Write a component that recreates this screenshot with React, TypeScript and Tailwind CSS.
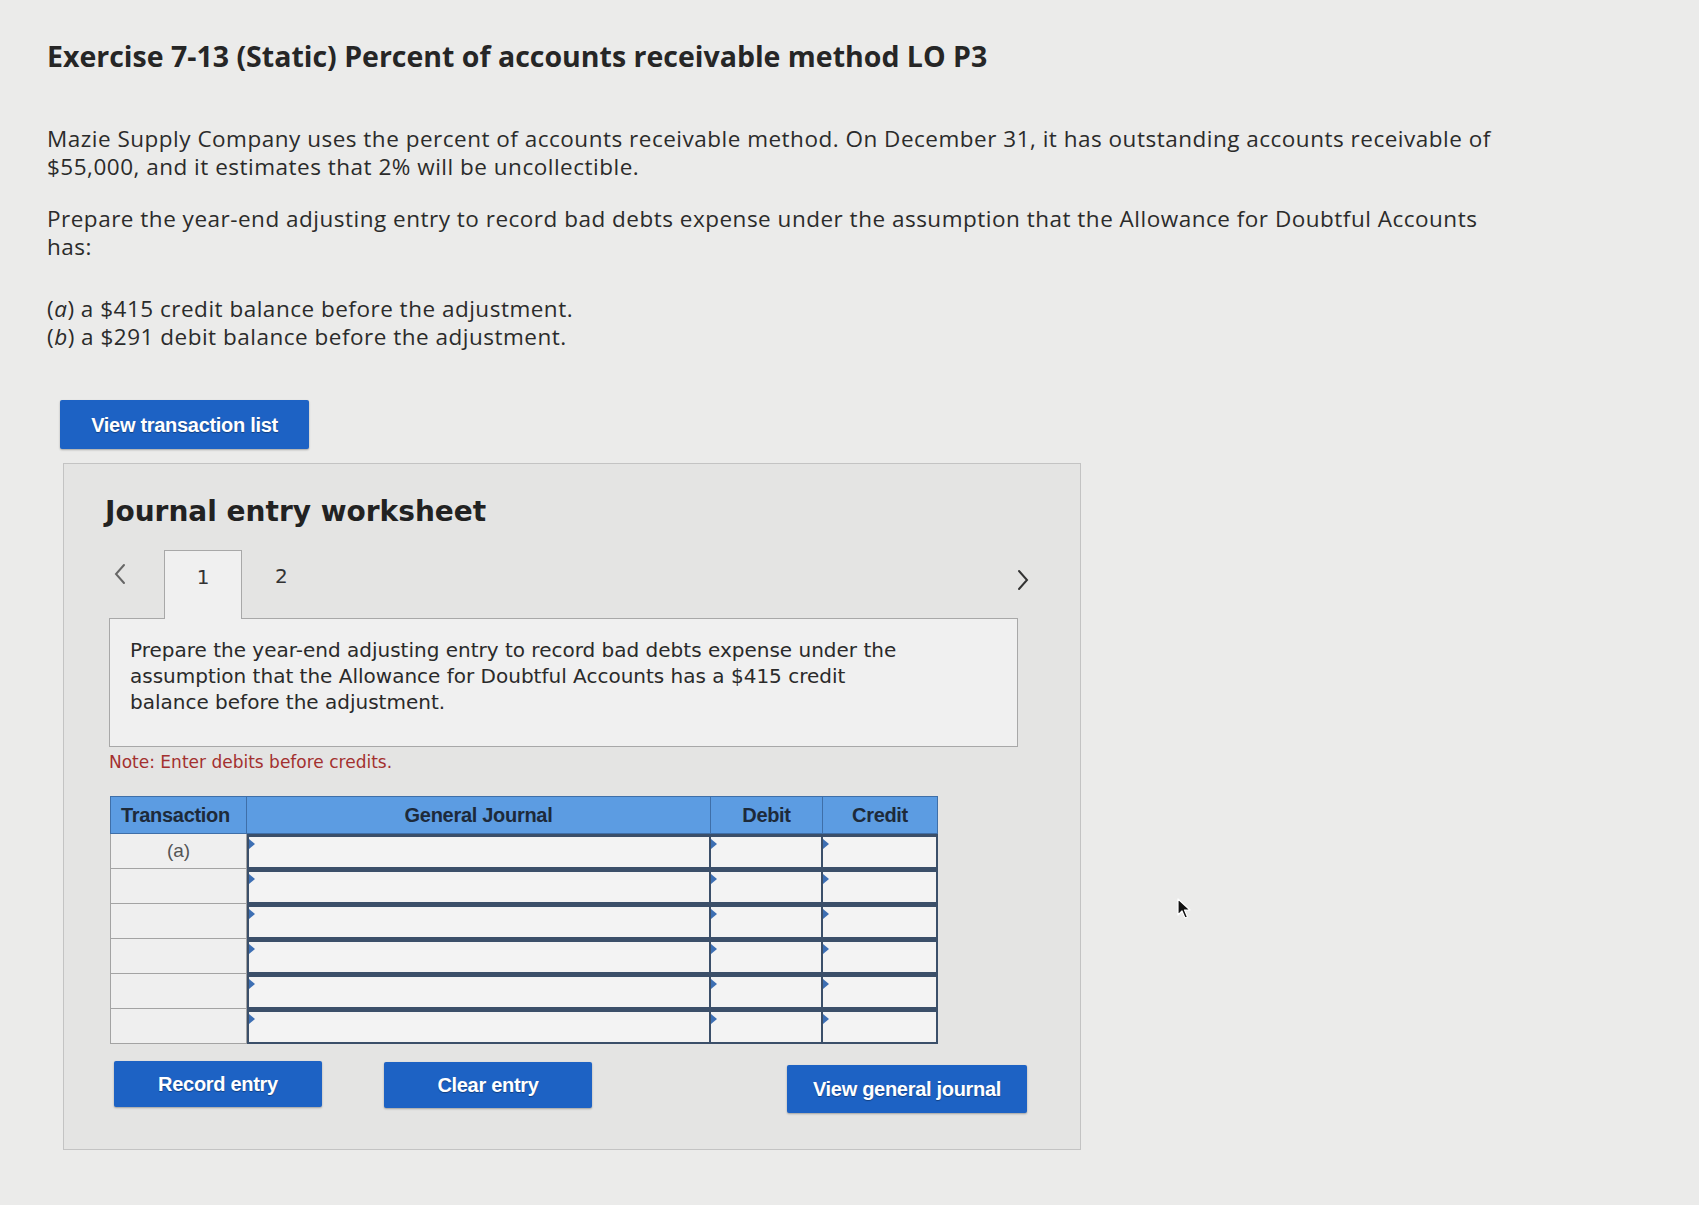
import React from "react";

const Tri = () => (
  <span className="absolute left-0 top-[2px] w-0 h-0 border-t-[5px] border-b-[5px] border-l-[6px] border-t-transparent border-b-transparent border-l-[#3d6fb3]" />
);

function Row({ label }: { label?: string }) {
  return (
    <>
      <div className="h-[35px] bg-[#efefef] border-b border-l border-r border-[#a3a3a3] flex items-center justify-center text-[19px] text-[#555] font-['Liberation_Sans',sans-serif]">
        {label}
      </div>
      <div className="h-[35px] relative bg-[#f3f3f3] border-2 border-t-[3px] border-[#3b4f69]">
        <Tri />
      </div>
      <div className="h-[35px] relative bg-[#f3f3f3] border-2 border-t-[3px] border-[#3b4f69] border-l-0">
        <Tri />
      </div>
      <div className="h-[35px] relative bg-[#f3f3f3] border-2 border-t-[3px] border-[#3b4f69] border-l-0">
        <Tri />
      </div>
    </>
  );
}

const btn =
  "shrink-0 h-[46px] bg-[#1d62c4] rounded-[2px] text-white text-[20px] font-bold tracking-[-0.3px] [text-shadow:0_1px_1px_rgba(0,0,0,0.35)] shadow-[0_1px_2px_rgba(0,0,0,0.3)]";

export default function App() {
  return (
    <div className="relative w-full min-h-[1205px] bg-[#ebebea] text-[#2b2b2b] overflow-hidden">
      <div className="pl-[47px] pt-[39px] font-['Open_Sans',sans-serif]">
        <h1 className="text-[28.5px] leading-[34px] font-bold text-[#262626]">
          Exercise 7-13 (Static) Percent of accounts receivable method LO P3
        </h1>
        <p className="mt-[52px] text-[22.5px] leading-[28px] tracking-[0.5px] w-[1600px]">
          Mazie Supply Company uses the percent of accounts receivable method. On December 31, it has outstanding accounts receivable of
          <br />
          $55,000, and it estimates that 2% will be uncollectible.
        </p>
        <p className="mt-[24px] text-[22.5px] leading-[28px] tracking-[0.5px] w-[1600px]">
          Prepare the year-end adjusting entry to record bad debts expense under the assumption that the Allowance for Doubtful Accounts
          <br />
          has:
        </p>
        <div className="mt-[34px] text-[22.5px] leading-[28px] tracking-[0.5px]">
          <div>
            (<i>a</i>) a $415 credit balance before the adjustment.
          </div>
          <div>
            (<i>b</i>) a $291 debit balance before the adjustment.
          </div>
        </div>

        <button className={`mt-[49px] ml-[13px] w-[249px] !h-[49px] font-['Liberation_Sans',sans-serif] ${btn}`}>
          View transaction list
        </button>

        <div className="mt-[14px] ml-[16px] w-[1018px] h-[687px] bg-[#e4e4e3] border border-[#c3c3c3] pt-[31px] pl-[45px] pr-[62px] font-['DejaVu_Sans',sans-serif]">
          <h2 className="text-[28px] leading-[34px] font-bold text-[#222] ml-[-4px]">
            Journal entry worksheet
          </h2>

          <div className="mt-[21px] relative h-[68px] flex items-start">
            <svg className="mt-[12px] ml-[4px]" width="14" height="24" viewBox="0 0 14 24">
              <path d="M11 3 L3 12 L11 21" fill="none" stroke="#666" strokeWidth="2" strokeLinecap="round" />
            </svg>
            <div className="ml-[37px] w-[78px] h-[69px] bg-[#f0f0f0] border border-b-0 border-[#a8a8a8] relative z-10 flex justify-center pt-[11px] text-[20px] text-[#333]">
              1
            </div>
            <div className="ml-[33px] pt-[11px] text-[20px] text-[#333]">2</div>
            <svg className="absolute right-[-12px] top-[18px]" width="14" height="24" viewBox="0 0 14 24">
              <path d="M3 3 L11 12 L3 21" fill="none" stroke="#333" strokeWidth="2" strokeLinecap="round" />
            </svg>
          </div>

          <div className="h-[129px] bg-[#f0f0f0] border border-[#a8a8a8] pt-[18px] pl-[20px] text-[20px] leading-[26px] text-[#2a2a2a]">
            Prepare the year-end adjusting entry to record bad debts expense under the
            <br />
            assumption that the Allowance for Doubtful Accounts has a $415 credit
            <br />
            balance before the adjustment.
          </div>

          <div className="mt-[5px] text-[17px] leading-[20px] text-[#a3302f]">
            Note: Enter debits before credits.
          </div>

          <div className="mt-[24px] ml-[1px] w-[828px] grid grid-cols-[137px_464px_112px_115px] font-['Liberation_Sans',sans-serif]">
            <div className="h-[38px] bg-[#5c9ce2] border border-[#3f6fa8] flex items-center pl-[10px] text-[20px] font-bold text-[#1d2a3a] tracking-[-0.3px]">
              Transaction
            </div>
            <div className="h-[38px] bg-[#5c9ce2] border-y border-r border-[#3f6fa8] flex items-center justify-center text-[20px] font-bold text-[#1d2a3a] tracking-[-0.3px]">
              General Journal
            </div>
            <div className="h-[38px] bg-[#5c9ce2] border-y border-r border-[#3f6fa8] flex items-center justify-center text-[20px] font-bold text-[#1d2a3a] tracking-[-0.3px]">
              Debit
            </div>
            <div className="h-[38px] bg-[#5c9ce2] border-y border-r border-[#3f6fa8] flex items-center justify-center text-[20px] font-bold text-[#1d2a3a] tracking-[-0.3px]">
              Credit
            </div>
            <Row label="(a)" />
            <Row />
            <Row />
            <Row />
            <Row />
            <Row />
          </div>

          <div className="mt-[17px] flex items-start font-['Liberation_Sans',sans-serif]">
            <button className={`ml-[5px] w-[208px] ${btn}`}>Record entry</button>
            <button className={`ml-[62px] mt-[1px] w-[208px] ${btn}`}>Clear entry</button>
            <button className={`ml-[195px] mt-[4px] w-[240px] !h-[48px] ${btn}`}>View general journal</button>
          </div>
        </div>
      </div>

      <svg className="absolute left-[1176px] top-[898px]" width="16" height="22" viewBox="0 0 16 22">
        <path d="M2 1 L2 17 L6 13 L9 20 L11.5 19 L8.5 12 L14 12 Z" fill="#111" stroke="#fff" strokeWidth="1.2" strokeLinejoin="round" />
      </svg>
    </div>
  );
}
